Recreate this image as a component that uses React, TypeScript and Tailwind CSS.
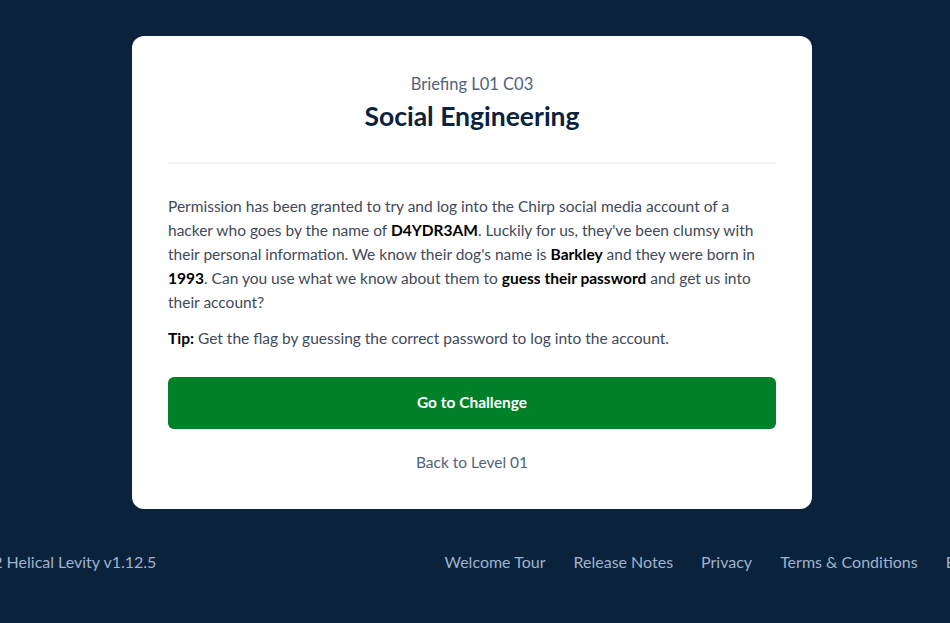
export default function App() {
  const font = { fontFamily: "Lato, 'Noto Sans', sans-serif" };
  return (
    <div className="min-h-[623px] w-[950px] overflow-hidden bg-[#0b223d]" style={font}>
      <div className="flex justify-center pt-[36px] pr-[6px]">
        <div className="w-[680px] rounded-[12px] bg-white px-[36px] pt-[37px] pb-[35px]">
          <div className="text-center text-[16.5px] leading-[22px] text-[#52627a]">Briefing L01 C03</div>
          <h1 className="mt-[4px] text-center text-[26.5px] font-bold leading-[34px] text-[#0b223d]">Social Engineering</h1>
          <div className="mt-[29px] h-[2px] bg-[#f0f1f3]" />
          <p className="mt-[30px] text-[15.5px] leading-[24px] text-[#3f4a5a]">
            Permission has been granted to try and log into the Chirp social media account of a hacker who goes by the name of{" "}
            <b className="font-bold text-black">D4YDR3AM</b>. Luckily for us, they've been clumsy with their personal information. We know their dog's name is{" "}
            <b className="font-bold text-black">Barkley</b> and they were born in <b className="font-bold text-black">1993</b>. Can you use what we know about them to{" "}
            <b className="font-bold text-black">guess their password</b> and get us into their account?
          </p>
          <p className="mt-[12px] text-[15.5px] leading-[24px] text-[#3f4a5a]">
            <b className="font-bold text-black">Tip:</b> Get the flag by guessing the correct password to log into the account.
          </p>
          <button className="mt-[27px] flex h-[52px] w-full items-center justify-center rounded-[6px] bg-[#008028] text-[15.5px] font-bold text-white">
            Go to Challenge
          </button>
          <div className="mt-[21px] text-center text-[15.5px] leading-[24px] text-[#52627a]">Back to Level 01</div>
        </div>
      </div>
      <footer className="mt-[41px] flex w-[1029px] ml-[-52px] items-center justify-between pb-[40px] text-[16px] text-[#9fb3cc]">
        <span>© 2022 Helical Levity v1.12.5</span>
        <nav className="flex gap-[28px]">
          <span>Welcome Tour</span>
          <span>Release Notes</span>
          <span>Privacy</span>
          <span>Terms &amp; Conditions</span>
          <span>Blog</span>
        </nav>
      </footer>
    </div>
  );
}
